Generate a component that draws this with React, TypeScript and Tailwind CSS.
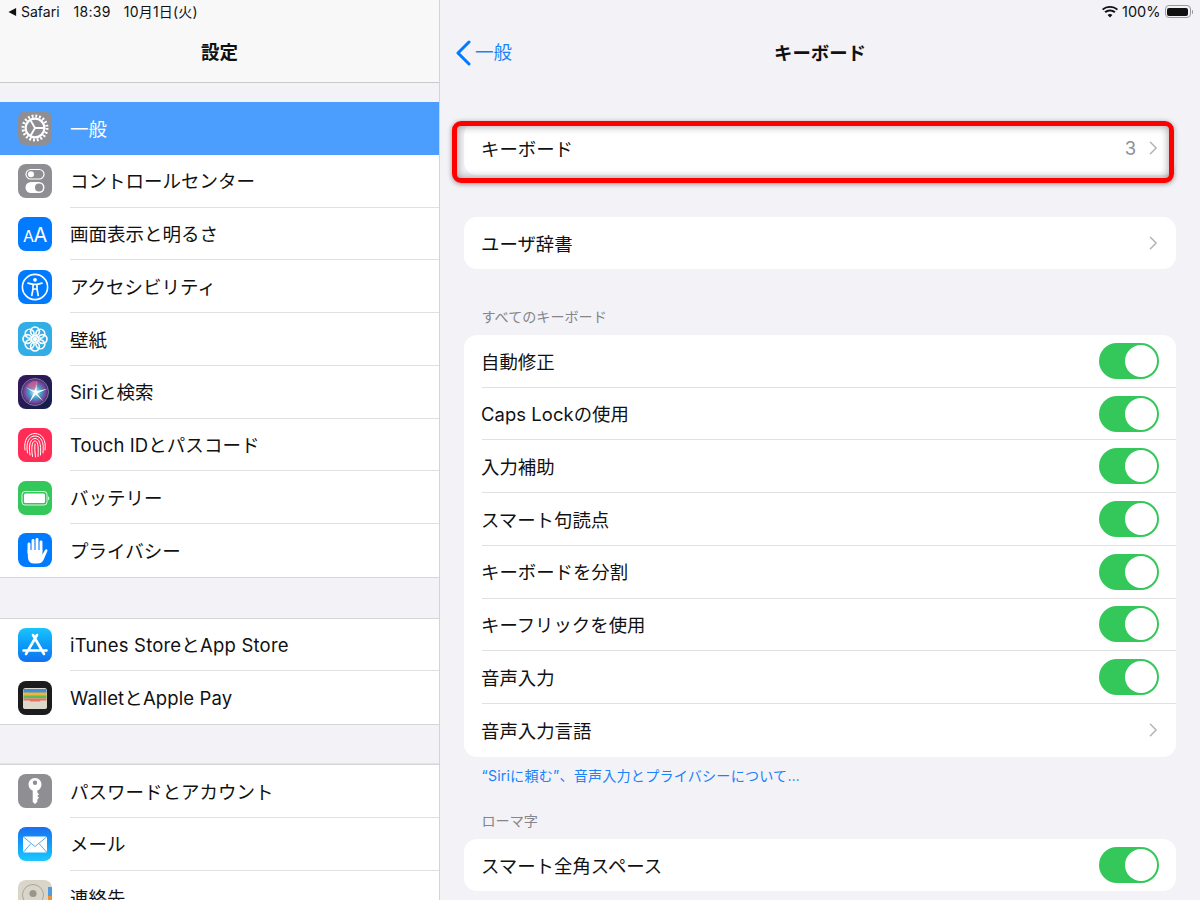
const font = { fontFamily: '"Inter", "Noto Sans CJK JP", sans-serif' };

function Tile({ bg, children }: { bg: string; children: React.ReactNode }) {
  return (
    <div className={`h-[34px] w-[34px] shrink-0 overflow-hidden rounded-[8px] ${bg}`}>
      <svg viewBox="0 0 34 34" className="h-full w-full">
        {children}
      </svg>
    </div>
  );
}

function GearIcon() {
  return (
    <Tile bg="bg-[#8e8e93]">
      <g fill="none" stroke="#fff">
        <circle cx="17" cy="17" r="12" strokeWidth="3" strokeDasharray="1.9 1.87" />
        <circle cx="17" cy="17" r="9.4" strokeWidth="2.2" />
        <path d="M17 17H26M17 17L12.5 9.2M17 17L12.5 24.8" strokeWidth="1.8" />
      </g>
    </Tile>
  );
}

function ControlIcon() {
  return (
    <Tile bg="bg-[#8e8e93]">
      <rect x="8" y="5.5" width="18" height="9.5" rx="4.75" fill="none" stroke="#fff" strokeWidth="1.2" />
      <circle cx="13" cy="10.2" r="3" fill="#fff" />
      <rect x="7.5" y="18" width="19" height="11" rx="5.5" fill="#fff" />
      <circle cx="21" cy="23.5" r="4" fill="#8e8e93" />
    </Tile>
  );
}

function DisplayIcon() {
  return (
    <Tile bg="bg-[#007aff]">
      <text x="5" y="24.5" fill="#fff" fontSize="16" fontFamily="Inter, sans-serif">A</text>
      <text x="15.5" y="24.5" fill="#fff" fontSize="20" fontFamily="Inter, sans-serif">A</text>
    </Tile>
  );
}

function AccessIcon() {
  return (
    <Tile bg="bg-[#007aff]">
      <circle cx="17" cy="17" r="12.6" fill="none" stroke="#fff" strokeWidth="1.6" />
      <circle cx="17" cy="9.8" r="1.9" fill="#fff" />
      <path d="M10 13.2L15 14.4H19L24 13.2M15 14.4V19L13.8 25.5M19 14.4V19L20.2 25.5M15 19H19" fill="none" stroke="#fff" strokeWidth="1.7" strokeLinecap="round" strokeLinejoin="round" />
    </Tile>
  );
}

function FlowerIcon() {
  const angles = [0, 45, 90, 135, 180, 225, 270, 315];
  return (
    <Tile bg="bg-[#32ade6]">
      {angles.map((a) => (
        <circle key={a} cx="17" cy="9.4" r="4.4" fill="none" stroke="#fff" strokeWidth="1.7" transform={`rotate(${a} 17 17)`} />
      ))}
      <circle cx="17" cy="17" r="2.2" fill="#fff" />
    </Tile>
  );
}

function SiriIcon() {
  return (
    <div className="h-[34px] w-[34px] shrink-0 overflow-hidden rounded-[8px] bg-gradient-to-br from-[#3a1560] to-[#0f1e4a]">
      <svg viewBox="0 0 34 34" className="h-full w-full">
        <defs>
          <radialGradient id="siri" cx="50%" cy="50%" r="50%">
            <stop offset="0%" stopColor="#d8f2ff" />
            <stop offset="45%" stopColor="#3ba3c8" />
            <stop offset="80%" stopColor="#7f3d9c" />
            <stop offset="100%" stopColor="#26345f" />
          </radialGradient>
        </defs>
        <circle cx="17" cy="17" r="13.5" fill="url(#siri)" stroke="#8d95a8" strokeWidth="0.8" />
        <path d="M17 18L7 12L16 16L19 6L18.5 16L29 14L19 18.5L25 26L17.5 19.5L11 28L15.5 18.5Z" fill="#fff" />
        <path d="M9 12C12 6 17 5 20 7L17 15Z" fill="#e0578f" opacity="0.7" />
      </svg>
    </div>
  );
}

function TouchIcon() {
  return (
    <Tile bg="bg-[#ff2d55]">
      <g fill="none" stroke="#fff" strokeWidth="1" strokeLinecap="round">
        <path d="M7 22C5.5 12 10 5.5 17 5.5S28.5 12 27 22" />
        <path d="M9.5 25C7.5 14 11.5 8 17 8S26.5 13 25 25" />
        <path d="M12 27C10 16 13 10.5 17 10.5S23.5 15 22.5 27" />
        <path d="M14.5 28.5C12.8 18 14.5 13 17 13S20.8 17 20 28.5" />
        <path d="M17 16C16.5 20 17 25 17.5 29" />
      </g>
    </Tile>
  );
}

function BatteryIcon() {
  return (
    <Tile bg="bg-[#34c759]">
      <rect x="4" y="10.5" width="25" height="13.5" rx="3" fill="none" stroke="#fff" strokeWidth="1" opacity="0.85" />
      <rect x="6" y="12.5" width="21" height="9.5" rx="1.5" fill="#fff" />
      <rect x="30" y="15.5" width="1.2" height="3.5" rx="0.6" fill="#fff" opacity="0.8" />
    </Tile>
  );
}

function HandIcon() {
  return (
    <Tile bg="bg-[#007aff]">
      <g stroke="#fff" strokeWidth="2.9" strokeLinecap="round" fill="none">
        <path d="M11 20V11" />
        <path d="M15 18V7.5" />
        <path d="M19 18V6.5" />
        <path d="M23 18V9" />
      </g>
      <path d="M9.6 17H24.4V21.5L27.2 16.8C28 15.6 30 16.3 29.4 18L25.5 27C24.4 29.5 22.3 30.5 19.5 30.5H16C12.5 30.5 10.6 28.5 10 25.5Z" fill="#fff" />
    </Tile>
  );
}

function AppStoreIcon() {
  return (
    <div className="h-[34px] w-[34px] shrink-0 overflow-hidden rounded-[8px] bg-gradient-to-b from-[#1cc3fd] to-[#1470f0]">
      <svg viewBox="0 0 34 34" className="h-full w-full">
        <path d="M19 7L8 26M15 7L26 26M5.5 22.5H28.5" fill="none" stroke="#fff" strokeWidth="2.6" strokeLinecap="round" />
      </svg>
    </div>
  );
}

function WalletIcon() {
  return (
    <Tile bg="bg-[#1c1c1e]">
      <rect x="5" y="7" width="24" height="21" rx="2.5" fill="#dcd8cc" />
      <rect x="5.5" y="8" width="23" height="4" fill="#3f8fd8" />
      <rect x="5.5" y="11.5" width="23" height="3.5" fill="#f2b632" />
      <rect x="5.5" y="14.5" width="23" height="3" fill="#5dbb5c" />
      <rect x="5.5" y="17.5" width="23" height="3" fill="#ef6e5f" />
      <path d="M5 19.5H11.5C13 23 21 23 22.5 19.5H29V25.5C29 27 28 28 26.5 28H7.5C6 28 5 27 5 25.5Z" fill="#dcd8cc" />
    </Tile>
  );
}

function KeyIcon() {
  return (
    <Tile bg="bg-[#8e8e93]">
      <path fillRule="evenodd" d="M17 4C21 4 23.5 7 23.5 10.5C23.5 13.5 21.8 15.7 19.3 16.6V18.5L21 20.2L19.3 22L21 23.7L19.3 25.6V28L17 30L14.7 28V16.6C12.2 15.7 10.5 13.5 10.5 10.5C10.5 7 13 4 17 4ZM17 6.5A2.2 2.2 0 1 0 17 10.9A2.2 2.2 0 1 0 17 6.5Z" fill="#fff" />
    </Tile>
  );
}

function MailIcon() {
  return (
    <div className="h-[34px] w-[34px] shrink-0 overflow-hidden rounded-[8px] bg-gradient-to-b from-[#1b6ff0] to-[#1ec8fe]">
      <svg viewBox="0 0 34 34" className="h-full w-full">
        <rect x="5" y="9.5" width="24" height="16" rx="1.5" fill="#fff" />
        <path d="M5.5 10L17 19.5L28.5 10M5.5 25L13 16.5M28.5 25L21 16.5" fill="none" stroke="#58aef5" strokeWidth="1" />
      </svg>
    </div>
  );
}

function ContactsIcon() {
  return (
    <Tile bg="bg-[#d9d5c9]">
      <circle cx="15" cy="15" r="10.5" fill="none" stroke="#a9a69c" strokeWidth="1" />
      <circle cx="15" cy="13.5" r="3.6" fill="#99968d" />
      <rect x="30" y="7" width="4" height="9" fill="#4f9be0" />
      <rect x="30" y="16" width="4" height="9" fill="#ef9237" />
    </Tile>
  );
}

function SideRow({
  icon,
  label,
  selected,
  last,
  tracking = "",
}: {
  icon: React.ReactNode;
  label: string;
  selected?: boolean;
  last?: boolean;
  tracking?: string;
}) {
  return (
    <div className={`flex h-[52.75px] items-center gap-[18px] pl-[18px] ${selected ? "bg-[#4b9efe]" : "bg-white"}`}>
      {icon}
      <div
        className={`flex h-full flex-1 items-center pt-[3px] text-[18.5px] ${tracking} ${selected ? "text-white" : "text-[#111]"} ${
          last || selected ? "" : "border-b-[1.5px] border-[#e0e0e2]"
        }`}
      >
        {label}
      </div>
    </div>
  );
}

function Sidebar() {
  return (
    <aside className="flex h-full w-[440px] shrink-0 flex-col overflow-hidden border-r border-[#d4d4d6]">
      <div className="h-[83px] shrink-0 border-b border-[#c9c9cb] bg-[#f8f8f8]">
        <div className="flex h-[23px] items-center pl-[8px] text-[14px] text-[#111]">
          <svg viewBox="0 0 10 10" className="mr-[4px] h-[10px] w-[9px]">
            <path d="M9 0.5V9.5L0.5 5Z" fill="#111" />
          </svg>
          <span>Safari</span>
          <span className="ml-[14px] tracking-[0.3px]">18:39</span>
          <span className="ml-[13px] tracking-[0.2px]">10月1日(火)</span>
        </div>
        <div className="flex h-[60px] items-center justify-center text-[18.5px] font-semibold text-[#111]">設定</div>
      </div>
      <div className="flex flex-col pt-[19px]">
        <div className="bg-white shadow-[inset_0_-1px_0_#d6d6d8]">
          <SideRow icon={<GearIcon />} label="一般" selected />
          <SideRow icon={<ControlIcon />} label="コントロールセンター" />
          <SideRow icon={<DisplayIcon />} label="画面表示と明るさ" />
          <SideRow icon={<AccessIcon />} label="アクセシビリティ" />
          <SideRow icon={<FlowerIcon />} label="壁紙" />
          <SideRow icon={<SiriIcon />} label="Siriと検索" />
          <SideRow icon={<TouchIcon />} label="Touch IDとパスコード" tracking="tracking-[0.08px]" />
          <SideRow icon={<BatteryIcon />} label="バッテリー" />
          <div className="border-b-[1.5px] border-[#d6d6d8]">
            <SideRow icon={<HandIcon />} label="プライバシー" last />
          </div>
        </div>
        <div className="mt-[40.75px] border-b-[1.5px] border-[#d6d6d8] bg-white shadow-[0_-1px_0_#d6d6d8]">
          <SideRow icon={<AppStoreIcon />} label="iTunes StoreとApp Store" tracking="tracking-[0.2px]" />
          <SideRow icon={<WalletIcon />} label="WalletとApple Pay" tracking="tracking-[0.13px]" last />
        </div>
        <div className="mt-[40px] bg-white shadow-[0_-1.5px_0_#d6d6d8]">
          <SideRow icon={<KeyIcon />} label="パスワードとアカウント" />
          <SideRow icon={<MailIcon />} label="メール" />
          <SideRow icon={<ContactsIcon />} label="連絡先" last />
        </div>
      </div>
    </aside>
  );
}

function Chevron() {
  return (
    <svg viewBox="0 0 10 16" className="mr-[1px] h-[14px] w-[9px]">
      <path d="M1.5 1.5L8 8L1.5 14.5" fill="none" stroke="#b4b4b8" strokeWidth="1.8" strokeLinecap="round" strokeLinejoin="round" />
    </svg>
  );
}

function Toggle() {
  return (
    <div className="flex h-[36px] w-[60px] items-center justify-end rounded-full bg-[#34c759] pr-[2px]">
      <div className="h-[32px] w-[32px] rounded-full bg-white" />
    </div>
  );
}

function Row({
  label,
  toggle,
  value,
  last,
  tracking = "",
}: {
  label: string;
  toggle?: boolean;
  value?: string;
  last?: boolean;
  tracking?: string;
}) {
  return (
    <div className="pl-[18px]">
      <div
        className={`flex h-[52.7px] items-center justify-between pr-[17px] text-[18.4px] text-[#111] ${
          last ? "" : "border-b-[1.5px] border-[#e0e0e2]"
        }`}
      >
        <span className={`-ml-[1px] pt-[3px] ${tracking}`}>{label}</span>
        {toggle ? (
          <Toggle />
        ) : (
          <div className="flex items-center gap-[13px]">
            {value && <span className="text-[#8e8e93]">{value}</span>}
            <Chevron />
          </div>
        )}
      </div>
    </div>
  );
}

function Card({ children }: { children: React.ReactNode }) {
  return <div className="mx-[24px] overflow-hidden rounded-[13px] bg-white">{children}</div>;
}

function Detail() {
  return (
    <main className="relative h-full flex-1 overflow-hidden">
      <div className="flex h-[23px] items-center justify-end gap-[3px] pr-[7px] text-[14.5px] text-[#111]">
        <svg viewBox="0 0 16 12" className="h-[12px] w-[16px]">
          <path d="M8 11.5L5.6 8.9C7 7.7 9 7.7 10.4 8.9ZM3.9 7.1L2.4 5.5C5.6 2.7 10.4 2.7 13.6 5.5L12.1 7.1C9.7 5.1 6.3 5.1 3.9 7.1ZM1.2 4.3L0 3C4.5-1 11.5-1 16 3L14.8 4.3C11 1 5 1 1.2 4.3Z" fill="#111" />
        </svg>
        <span className="ml-[1px]">100%</span>
        <div className="ml-[1px] flex items-center">
          <div className="h-[13px] w-[26px] rounded-[4px] border border-[#9a9a9e] p-[1.5px]">
            <div className="h-full w-full rounded-[2px] bg-[#111]" />
          </div>
          <div className="ml-[1px] h-[4px] w-[1.5px] rounded-r bg-[#9a9a9e]" />
        </div>
      </div>
      <div className="grid h-[60px] grid-cols-3 items-center">
        <div className="flex items-center pl-[15px] text-[18.5px] text-[#1a82fb]">
          <svg viewBox="0 0 16 26" className="mr-[4px] h-[26px] w-[16px]">
            <path d="M14 2L3 13L14 24" fill="none" stroke="#007aff" strokeWidth="3" strokeLinecap="round" strokeLinejoin="round" />
          </svg>
          一般
        </div>
        <div className="pt-[2px] text-center text-[18.4px] font-semibold text-[#111]">キーボード</div>
      </div>
      <div className="pt-[39px]">
        <Card>
          <Row label="キーボード" value="3" last />
        </Card>
      </div>
      <div className="pt-[42px]">
        <Card>
          <Row label="ユーザ辞書" last />
        </Card>
      </div>
      <div className="flex h-[65.7px] items-end pr-[42px] pb-[8px] pl-[41.5px] text-[14.1px] leading-[20px] text-[#85858a]">すべてのキーボード</div>
      <Card>
        <Row label="自動修正" toggle />
        <Row label="Caps Lockの使用" toggle tracking="tracking-[0.08px]" />
        <Row label="入力補助" toggle />
        <Row label="スマート句読点" toggle />
        <Row label="キーボードを分割" toggle />
        <Row label="キーフリックを使用" toggle />
        <Row label="音声入力" toggle />
        <Row label="音声入力言語" last />
      </Card>
      <div className="flex h-[82px] flex-col justify-between pt-[9px] pr-[42px] pb-[8px] pl-[41.5px] text-[14.1px] leading-[20px]">
        <div className="tracking-[0.2px] text-[#1a82fb]">“Siriに頼む”、音声入力とプライバシーについて…</div>
        <div className="text-[#85858a]">ローマ字</div>
      </div>
      <Card>
        <Row label="スマート全角スペース" toggle last />
      </Card>
      {/* red annotation drawn over the first row */}
      <div className="absolute top-[120.5px] left-[12px] h-[62px] w-[722px] rounded-[9px] border-[5px] border-[#f00] shadow-[0_1px_5px_rgba(0,0,0,0.4),inset_0_0_8px_rgba(0,0,0,0.4)]" />
    </main>
  );
}

export default function App() {
  return (
    <div className="flex h-[900px] w-[1200px] overflow-hidden bg-[#f2f2f7]" style={font}>
      <Sidebar />
      <Detail />
    </div>
  );
}
